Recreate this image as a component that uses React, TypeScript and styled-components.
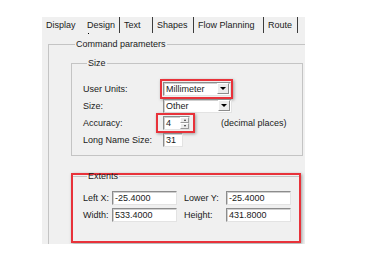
import React from 'react';
import styled, { createGlobalStyle } from 'styled-components';

const GlobalStyle = createGlobalStyle`
  html, body {
    margin: 0;
    padding: 0;
    background: #ffffff;
  }
  body {
    font-family: "Liberation Sans", Arial, sans-serif;
    font-size: 9px;
    color: #1a1a1a;
  }
`;

const tabs = [
  { label: 'Display', width: 43 },
  { label: 'Design', width: 35, active: true },
  { label: 'Text', width: 33 },
  { label: 'Shapes', width: 41 },
  { label: 'Flow Planning', width: 70 },
  { label: 'Route', width: 34 },
];

const App = () => {
  return (
    <>
      <GlobalStyle />
      <Panel>
        <TabStrip>
          {tabs.map((t) => (
            <Tab key={t.label} $width={t.width} $active={!!t.active} $sep={t.label !== 'Display'}>
              {t.label}
            </Tab>
          ))}
        </TabStrip>

        <CommandBox>
          <Legend>Command parameters</Legend>

          <SizeBox>
            <Legend>Size</Legend>
            <SizeGrid>
              <Label>User Units:</Label>
              <Highlight>
                <Combo $width={68}>
                  <ComboText>Millimeter</ComboText>
                  <ComboButton />
                </Combo>
              </Highlight>

              <Label>Size:</Label>
              <Combo $width={69}>
                <ComboText>Other</ComboText>
                <ComboButton />
              </Combo>

              <Label>Accuracy:</Label>
              <AccuracyRow>
                <Highlight $pad="1px 3px 1px 5px">
                  <Spinner>
                    <SpinField>4</SpinField>
                    <SpinButtons>
                      <SpinArrow $up />
                      <SpinArrow />
                    </SpinButtons>
                  </Spinner>
                </Highlight>
                <Hint>(decimal places)</Hint>
              </AccuracyRow>

              <Label>Long Name Size:</Label>
              <TextField $width={20}>31</TextField>
            </SizeGrid>
          </SizeBox>

          <ExtentsHighlight>
            <ExtentsBox>
              <Legend>Extents</Legend>
              <ExtentsGrid>
                <Label>Left X:</Label>
                <TextField $width={65}>-25.4000</TextField>
                <Label>Lower Y:</Label>
                <TextField $width={65}>-25.4000</TextField>

                <Label>Width:</Label>
                <TextField $width={65}>533.4000</TextField>
                <Label>Height:</Label>
                <TextField $width={65}>431.8000</TextField>
              </ExtentsGrid>
            </ExtentsBox>
          </ExtentsHighlight>
        </CommandBox>
      </Panel>
    </>
  );
};

const Panel = styled.div`
  width: 263px;
  height: 227px;
  margin: 17px 0 0 42px;
  background: #f0f0f0;
  overflow: hidden;
`;

const TabStrip = styled.div`
  display: flex;
  height: 19px;
  align-items: flex-start;
`;

const Tab = styled.div<{ $width: number; $active: boolean; $sep: boolean }>`
  position: relative;
  width: ${(p) => p.$width}px;
  height: 16px;
  box-sizing: border-box;
  padding-left: ${(p) => (p.$active ? 2 : 4)}px;
  display: flex;
  align-items: center;
  white-space: nowrap;
  font-size: 9px;
  border-right: ${(p) => (p.$sep ? '1px solid #3c3c3c' : 'none')};

  &::after {
    content: ${(p) => (p.$active ? "''" : 'none')};
    position: absolute;
    left: 3px;
    bottom: -1px;
    width: 1px;
    height: 1px;
    background: #000;
  }
`;

const Legend = styled.legend`
  padding: 0 1px;
  margin-left: 4px;
  line-height: 11px;
  font-size: 9px;
  white-space: nowrap;
`;

const CommandBox = styled.fieldset`
  margin: 3px 0 0 6px;
  width: 280px;
  height: 230px;
  box-sizing: border-box;
  padding: 7px 0 0 22px;
  border: 1px solid #c4c4c4;
  border-right: none;
  border-bottom: none;
`;

const SizeBox = styled.fieldset`
  margin: 1px 0 0 0;
  width: 232px;
  height: 98px;
  box-sizing: border-box;
  padding: 11px 0 0 11px;
  border: 1px solid #c4c4c4;
`;

const SizeGrid = styled.div`
  display: grid;
  grid-template-columns: 80px auto;
  grid-auto-rows: 17px;
  align-items: center;
`;

const Label = styled.span`
  white-space: nowrap;
  font-size: 9px;
`;

const Highlight = styled.div<{ $pad?: string }>`
  justify-self: start;
  display: flex;
  margin: -3px 0 -3px -3px;
  padding: ${(p) => p.$pad || '1px 0 1px 1px'};
  border: 2px solid #e8323a;
  box-shadow: 1px 1px 3px rgba(0, 0, 0, 0.35);
`;

const sunken = `
  background: #ffffff;
  border: 1px solid;
  border-color: #8c8c8c #e3e3e3 #e3e3e3 #8c8c8c;
  box-shadow: inset 1px 1px 0 #cfcfcf;
  box-sizing: border-box;
`;

const Combo = styled.div<{ $width: number }>`
  ${sunken}
  width: ${(p) => p.$width}px;
  height: 14px;
  display: flex;
  align-items: center;
  justify-content: space-between;
`;

const ComboText = styled.span`
  padding-left: 2px;
  font-size: 9px;
`;

const ComboButton = styled.span`
  width: 12px;
  height: 11px;
  margin-right: 1px;
  background: #ececec;
  border: 1px solid;
  border-color: #ffffff #8c8c8c #8c8c8c #ffffff;
  box-sizing: border-box;
  display: flex;
  align-items: center;
  justify-content: center;

  &::after {
    content: '';
    border-left: 3px solid transparent;
    border-right: 3px solid transparent;
    border-top: 3px solid #000;
  }
`;

const AccuracyRow = styled.div`
  display: flex;
  align-items: center;
  margin-left: -4px;
  gap: 26px;
`;

const Spinner = styled.div`
  ${sunken}
  display: flex;
  align-items: stretch;
  width: 27px;
  height: 14px;
`;

const SpinField = styled.span`
  flex: 1;
  padding-left: 2px;
  display: flex;
  align-items: center;
  font-size: 9px;
`;

const SpinButtons = styled.div`
  width: 9px;
  display: flex;
  flex-direction: column;
`;

const SpinArrow = styled.span<{ $up?: boolean }>`
  flex: 1;
  background: #ececec;
  border: 1px solid;
  border-color: #ffffff #9a9a9a #9a9a9a #ffffff;
  box-sizing: border-box;
  display: flex;
  align-items: center;
  justify-content: center;

  &::after {
    content: '';
    border-left: 1.5px solid transparent;
    border-right: 1.5px solid transparent;
    ${(p) => (p.$up ? 'border-bottom: 2px solid #333;' : 'border-top: 2px solid #333;')}
  }
`;

const Hint = styled.span`
  font-size: 9px;
  white-space: nowrap;
`;

const TextField = styled.div<{ $width: number }>`
  ${sunken}
  width: ${(p) => p.$width}px;
  height: 14px;
  padding-left: 2px;
  display: flex;
  align-items: center;
  font-size: 9px;
`;

const ExtentsHighlight = styled.div`
  width: 230px;
  height: 70px;
  box-sizing: border-box;
  margin: 17px 0 0 0;
  border: 2px solid #e8323a;
  box-shadow: 1px 1px 3px rgba(0, 0, 0, 0.35);
`;

const ExtentsBox = styled.fieldset`
  margin: -4px 0 0 0;
  height: 66px;
  box-sizing: border-box;
  padding: 9px 0 0 10px;
  border: none;
  border-top: 1px solid #c4c4c4;
`;

const ExtentsGrid = styled.div`
  display: grid;
  grid-template-columns: 29px 72px 42px 65px;
  row-gap: 3px;
  grid-auto-rows: 14px;
  align-items: center;
`;

export default App;
